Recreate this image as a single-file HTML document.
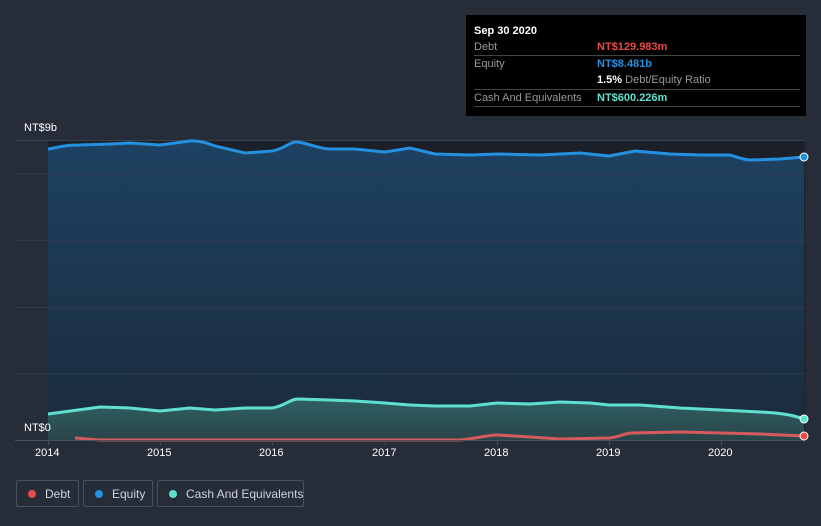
<!DOCTYPE html>
<html><head><meta charset="utf-8"><style>
html,body{margin:0;width:821px;height:526px;overflow:hidden}
body{background:#262d39;font-family:"Liberation Sans",sans-serif;position:relative}
.tip{position:absolute;left:466px;top:15px;width:340px;height:101px;background:#000;color:#fff;font-size:11px}
.row{position:absolute;left:8px;width:326px;border-bottom:1px solid #444;height:16px}
.l{position:absolute;left:0;color:#999}
.v{position:absolute;left:123px;font-weight:bold}
.leg{position:absolute;top:480px;height:27px;border:1px solid #4a505c;border-radius:2px;color:#cfd3da;font-size:12px;line-height:26px;box-sizing:border-box;white-space:nowrap}
.dot{position:absolute;left:11px;top:9px;width:8px;height:8px;border-radius:50%}
.ax{position:absolute;color:#fff;font-size:11px}
</style></head><body>
<svg width="821" height="526" style="position:absolute;left:0;top:0">
<defs>
<linearGradient id="eg" x1="0" y1="0" x2="0" y2="1"><stop offset="0" stop-color="#1d4262"/><stop offset="1" stop-color="#1b2a3b"/></linearGradient>
<linearGradient id="cg" x1="0" y1="0" x2="0" y2="1"><stop offset="0" stop-color="#2f6064"/><stop offset="1" stop-color="#2a4549"/></linearGradient>
</defs>
<rect x="48" y="140" width="757" height="300" fill="#1a1f28"/>
<path d="M48,149 C60,147 65,145 80,145 L110,144 L130,143 L160,145 L190,141 C200,140 210,144 215,146 L245,153 L272,151 C285,149 290,141 298,142 C310,144 320,149 330,149 L355,149 L385,152 L410,148 L435,154 L470,155 L497,154 L540,155 L580,153 L609,156 L635,151 L670,154 L700,155 L730,155 C740,158 745,160 750,160 L780,159 L804,157 L804,440 L48,440Z" fill="url(#eg)"/>
<g stroke="#2f3b4a" stroke-width="1"><line x1="15" x2="805" y1="140.5" y2="140.5" stroke="#3a4250"/><line x1="15" x2="805" y1="173.5" y2="173.5"/><line x1="15" x2="805" y1="240.5" y2="240.5"/><line x1="15" x2="805" y1="307.5" y2="307.5"/><line x1="15" x2="805" y1="373.5" y2="373.5"/></g>
<path d="M48,149 C60,147 65,145 80,145 L110,144 L130,143 L160,145 L190,141 C200,140 210,144 215,146 L245,153 L272,151 C285,149 290,141 298,142 C310,144 320,149 330,149 L355,149 L385,152 L410,148 L435,154 L470,155 L497,154 L540,155 L580,153 L609,156 L635,151 L670,154 L700,155 L730,155 C740,158 745,160 750,160 L780,159 L804,157" fill="none" stroke="#2590e0" stroke-width="3"/>
<path d="M48,414 L100,407 L130,408 L160,411 L190,408 L215,410 L245,408 L272,408 C285,406 290,399 298,399 L330,400 L355,401 L385,403 L410,405 L435,406 L470,406 L497,403 L530,404 L560,402 L590,403 L609,405 L640,405 L680,408 L721,410 L760,412 C785,413 795,416 804,419 L804,440 L48,440Z" fill="url(#cg)"/>
<path d="M48,414 L100,407 L130,408 L160,411 L190,408 L215,410 L245,408 L272,408 C285,406 290,399 298,399 L330,400 L355,401 L385,403 L410,405 L435,406 L470,406 L497,403 L530,404 L560,402 L590,403 L609,405 L640,405 L680,408 L721,410 L760,412 C785,413 795,416 804,419" fill="none" stroke="#5fe0cf" stroke-width="3"/>
<path d="M75,438 L100,440 L460,440 C480,438 488,435 497,435 L530,437 L560,439 L609,438 C620,437 625,433 632,433 L680,432 L721,433 L760,434 L804,436" fill="none" stroke="#d45a5e" stroke-width="3"/>
<line x1="15" x2="805" y1="440.5" y2="440.5" stroke="#4a505c"/>
<g stroke="#4a505c"><line x1="48.5" x2="48.5" y1="440" y2="445"/><line x1="160.5" x2="160.5" y1="440" y2="445"/><line x1="272.5" x2="272.5" y1="440" y2="445"/><line x1="385.5" x2="385.5" y1="440" y2="445"/><line x1="497.5" x2="497.5" y1="440" y2="445"/><line x1="609.5" x2="609.5" y1="440" y2="445"/><line x1="721.5" x2="721.5" y1="440" y2="445"/></g>
<circle cx="804" cy="157" r="4" fill="#2590e0" stroke="#fff" stroke-width="1"/>
<circle cx="804" cy="419" r="4" fill="#5fe0cf" stroke="#fff" stroke-width="1"/>
<circle cx="804" cy="436" r="4" fill="#e84a4a" stroke="#fff" stroke-width="1"/>
</svg>
<div class="ax" style="left:24px;top:122px">NT$9b</div>
<div class="ax" style="left:24px;top:422px">NT$0</div>
<div class="ax" style="left:35px;top:447px">2014</div>
<div class="ax" style="left:147px;top:447px">2015</div>
<div class="ax" style="left:259px;top:447px">2016</div>
<div class="ax" style="left:372px;top:447px">2017</div>
<div class="ax" style="left:484px;top:447px">2018</div>
<div class="ax" style="left:596px;top:447px">2019</div>
<div class="ax" style="left:708px;top:447px">2020</div>
<div class="tip">
<div style="position:absolute;left:8px;top:10px;font-weight:bold">Sep 30 2020</div>
<div class="row" style="top:24px"><span class="l" style="top:2px">Debt</span><span class="v" style="top:2px;color:#e84a4a">NT$129.983m</span></div>
<div class="row" style="top:41px;height:33px"><span class="l" style="top:2px">Equity</span><span class="v" style="top:2px;color:#2590e0">NT$8.481b</span><span style="position:absolute;left:123px;top:18px;color:#999"><b style="color:#fff">1.5%</b> Debt/Equity Ratio</span></div>
<div class="row" style="top:75px"><span class="l" style="top:2px">Cash And Equivalents</span><span class="v" style="top:2px;color:#5fe0cf">NT$600.226m</span></div>
</div>
<div class="leg" style="left:16px;width:63px"><span class="dot" style="background:#e84a4a"></span><span style="position:absolute;left:28px">Debt</span></div>
<div class="leg" style="left:83px;width:70px"><span class="dot" style="background:#2590e0"></span><span style="position:absolute;left:28px">Equity</span></div>
<div class="leg" style="left:157px;width:147px"><span class="dot" style="background:#5fe0cf"></span><span style="position:absolute;left:28px">Cash And Equivalents</span></div>
</body></html>
